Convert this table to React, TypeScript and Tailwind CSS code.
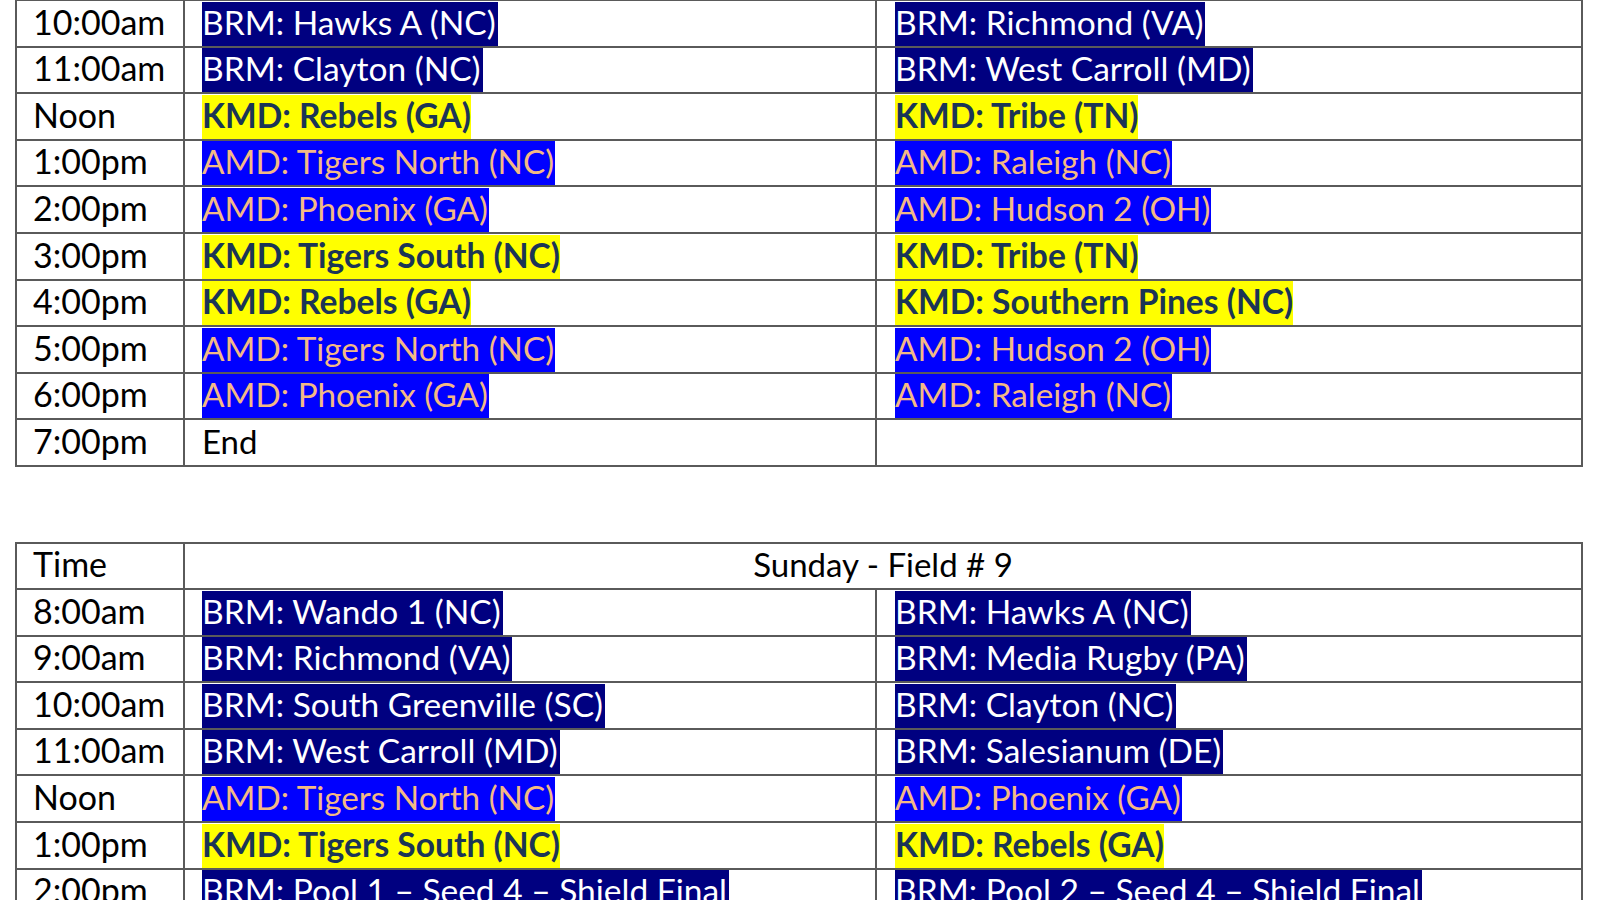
import React from "react";

type Kind = "brm" | "amd" | "kmd" | "plain" | "none";

const kindOf = (t: string): Kind => {
  if (!t) return "none";
  if (t.startsWith("BRM")) return "brm";
  if (t.startsWith("AMD")) return "amd";
  if (t.startsWith("KMD")) return "kmd";
  return "plain";
};

const top: [string, string, string][] = [
  ["10:00am", "BRM: Hawks A (NC)", "BRM: Richmond (VA)"],
  ["11:00am", "BRM: Clayton (NC)", "BRM: West Carroll (MD)"],
  ["Noon", "KMD: Rebels (GA)", "KMD: Tribe (TN)"],
  ["1:00pm", "AMD: Tigers North (NC)", "AMD: Raleigh (NC)"],
  ["2:00pm", "AMD: Phoenix (GA)", "AMD: Hudson 2 (OH)"],
  ["3:00pm", "KMD: Tigers South (NC)", "KMD: Tribe (TN)"],
  ["4:00pm", "KMD: Rebels (GA)", "KMD: Southern Pines (NC)"],
  ["5:00pm", "AMD: Tigers North (NC)", "AMD: Hudson 2 (OH)"],
  ["6:00pm", "AMD: Phoenix (GA)", "AMD: Raleigh (NC)"],
  ["7:00pm", "End", ""],
];

const bottom: [string, string, string][] = [
  ["8:00am", "BRM: Wando 1 (NC)", "BRM: Hawks A (NC)"],
  ["9:00am", "BRM: Richmond (VA)", "BRM: Media Rugby (PA)"],
  ["10:00am", "BRM: South Greenville (SC)", "BRM: Clayton (NC)"],
  ["11:00am", "BRM: West Carroll (MD)", "BRM: Salesianum (DE)"],
  ["Noon", "AMD: Tigers North (NC)", "AMD: Phoenix (GA)"],
  ["1:00pm", "KMD: Tigers South (NC)", "KMD: Rebels (GA)"],
  ["2:00pm", "BRM: Pool 1 – Seed 4 – Shield Final", "BRM: Pool 2 – Seed 4 – Shield Final"],
];

function Entry({ text }: { text: string }) {
  const k = kindOf(text);
  if (k === "none") return null;
  if (k === "plain") return <span className="block pb-[4px] leading-[40px]">{text}</span>;
  const cls =
    k === "brm"
      ? "bg-[#000080] text-white text-[33.5px] pr-[2px]"
      : k === "amd"
      ? "bg-[#0000ff] text-[#f3b985] text-[33.3px] pr-[1px]"
      : "bg-[#ffff00] text-[#1b3556] font-bold text-[33.6px]";
  return (
    <span className={`inline-block h-[44px] leading-[41px] whitespace-nowrap ${cls}`}>{text}</span>
  );
}

function Row({ r, tall }: { r: [string, string, string]; tall: boolean }) {
  return (
    <div
      className={`grid grid-cols-[168px_692px_1fr] grid-rows-[100%] border-b-2 border-[#5a5a5a] ${
        tall ? "h-[47px]" : "h-[46px]"
      }`}
    >
      <div className="border-r-2 border-[#5a5a5a] pl-[16px] pb-[4px] flex items-center text-black text-[34px] leading-[40px] overflow-hidden">
        {r[0]}
      </div>
      <div className="border-r-2 border-[#5a5a5a] pl-[17px] flex items-center overflow-hidden text-black">
        <Entry text={r[1]} />
      </div>
      <div className="pl-[18px] flex items-center overflow-hidden text-black">
        <Entry text={r[2]} />
      </div>
    </div>
  );
}

export default function App() {
  return (
    <div className="w-[1600px] h-[900px] overflow-hidden bg-white font-['Lato',sans-serif] text-[33px] leading-[40px]">
      <div className="ml-[15px] mt-[-1px] w-[1568px] border-t-2 border-l-2 border-r-2 border-[#5a5a5a]">
        {top.map((r, i) => (
          <Row key={i} r={r} tall={i % 5 !== 1 && i % 5 !== 3} />
        ))}
      </div>
      <div className="ml-[15px] mt-[75px] w-[1568px] border-t-2 border-l-2 border-r-2 border-[#5a5a5a]">
        <div className="grid grid-cols-[168px_1fr] grid-rows-[100%] h-[46px] border-b-2 border-[#5a5a5a]">
          <div className="border-r-2 border-[#5a5a5a] pl-[16px] pb-[4px] flex items-center text-[34px] leading-[40px] overflow-hidden">
            Time
          </div>
          <div className="flex items-center justify-center pb-[4px] leading-[40px] overflow-hidden">
            Sunday - Field # 9
          </div>
        </div>
        {bottom.map((r, i) => (
          <Row key={i} r={r} tall={i % 5 !== 1 && i % 5 !== 3} />
        ))}
      </div>
    </div>
  );
}
